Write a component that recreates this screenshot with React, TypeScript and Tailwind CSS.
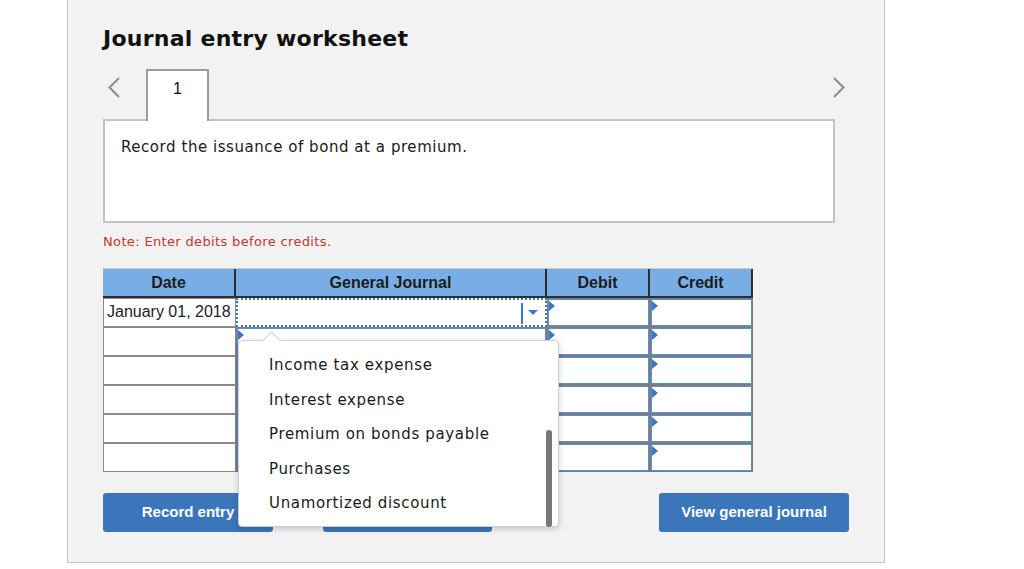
import { useState } from "react";

const VERDANA = "font-['DejaVu_Sans',Verdana,sans-serif]";
const ARIAL = "font-['Liberation_Sans',Arial,sans-serif]";

const accounts = [
  "Income tax expense",
  "Interest expense",
  "Premium on bonds payable",
  "Purchases",
  "Unamortized discount",
];

// small blue marker in the top-left corner of an input cell
function Marker() {
  return (
    <span className="absolute left-0 top-[1px] h-0 w-0 border-y-[5px] border-l-[6px] border-y-transparent border-l-[#3a76c4]" />
  );
}

function InputCell() {
  return (
    <div className="h-full border border-[#7c7c7c] bg-white">
      <div className="relative h-full border border-[#5a8fd0] bg-white">
        <Marker />
      </div>
    </div>
  );
}

function Chevron({ dir }: { dir: "left" | "right" }) {
  return (
    <svg width="12" height="21" viewBox="0 0 12 21" fill="none">
      <polyline
        points={dir === "left" ? "11,1 1.5,10.5 11,20" : "1,1 10.5,10.5 1,20"}
        stroke="#8c8c8c"
        strokeWidth="2"
      />
    </svg>
  );
}

export default function App() {
  const [rows] = useState(["January 01, 2018", "", "", "", "", ""]);

  return (
    <div className="min-h-screen bg-white">
      <div className="ml-[67px] h-[563px] w-[818px] border-x border-b border-[#c6c6c6] bg-[#f2f2f2] pl-[35px] pr-[35px] pt-[24px]">
        {/* Title */}
        <h1 className={`${VERDANA} text-[22px] leading-[30px] font-bold tracking-[0.25px] text-[#111]`}>
          Journal entry worksheet
        </h1>

        {/* Tabs */}
        <div className="mt-[15px] flex h-[50px] items-start">
          <div className="w-[43px] pl-[5px] pt-[8px]">
            <Chevron dir="left" />
          </div>
          <div className={`${ARIAL} relative z-10 h-[52px] w-[63px] border-2 border-b-0 border-[#9b9b9b] bg-white pt-[8px] text-center text-[16px] leading-[20px] text-[#111]`}>
            1
          </div>
          <div className="ml-auto mr-[4px] pt-[8px]">
            <Chevron dir="right" />
          </div>
        </div>

        {/* Question box */}
        <div className={`${VERDANA} h-[104px] w-[732px] border-2 border-[#c3c3c3] bg-white pl-[16px] pt-[16px] text-[15px] leading-[20px] tracking-[0.55px] text-[#1a1a1a]`}>
          Record the issuance of bond at a premium.
        </div>

        <p className={`${VERDANA} mt-[10px] text-[13px] leading-[18px] tracking-[0.35px] text-[#c0392b]`}>
          Note: Enter debits before credits.
        </p>

        {/* Journal table */}
        <div className="relative mt-[17px] w-[650px]">
          <div className={`${ARIAL} grid h-[30px] grid-cols-[133px_311px_103px_103px] border-t border-b-2 border-t-[#c8c8c8] border-b-[#2e2e2e] bg-[#78ade5] text-[16px] leading-[27px] font-bold text-[#1c1c1c]`}>
            <div className="border-r-2 border-[#2e2e2e] text-center">Date</div>
            <div className="border-r-2 border-[#2e2e2e] text-center">General Journal</div>
            <div className="border-r-2 border-[#2e2e2e] text-center">Debit</div>
            <div className="border-r-2 border-[#2e2e2e] text-center">Credit</div>
          </div>

          {rows.map((date, i) => (
            <div key={i} className="grid h-[29px] grid-cols-[133px_311px_103px_103px]">
              <div className={`${ARIAL} border border-[#8a8a8a] bg-white pl-[3px] text-[16px] leading-[25px] text-[#222]`}>
                {date}
              </div>
              {i === 0 ? (
                <div className="relative h-full border-2 border-dotted border-[#3a78c6] bg-white">
                  <span className="absolute right-[22px] top-[3px] h-[21px] w-[2px] bg-[#3a78c6]" />
                  <span className="absolute right-[7px] top-[10px] h-0 w-0 border-x-[5px] border-t-[5px] border-x-transparent border-t-[#3a78c6]" />
                </div>
              ) : (
                <InputCell />
              )}
              <InputCell />
              <InputCell />
            </div>
          ))}

          {/* Account dropdown */}
          <div className={`${VERDANA} absolute left-[135px] top-[72px] z-20 h-[187px] w-[321px] rounded-[4px] border border-[#cfcfcf] bg-white pt-[7px] shadow-[0_2px_6px_rgba(0,0,0,0.18)]`}>
            <span className="absolute left-[26px] top-[-7px] h-[13px] w-[13px] rotate-45 border-l border-t border-[#cfcfcf] bg-white" />
            {accounts.map((a) => (
              <div key={a} className="h-[34.5px] pl-[30px] text-[15px] leading-[34.5px] tracking-[0.65px] text-[#1a1a1a]">
                {a}
              </div>
            ))}
            <span className="absolute left-[307px] top-[89px] h-[97px] w-[6px] rounded-full bg-[#777]" />
          </div>
        </div>

        {/* Buttons */}
        <div className={`${ARIAL} mt-[21px] flex h-[39px] text-[15px] font-bold text-white`}>
          <button className="w-[170px] rounded-[3px] bg-[#3b76bb]">Record entry</button>
          {/* label hidden behind the open dropdown */}
          <button aria-label="Clear entry" className="ml-[50px] w-[169px] rounded-[3px] bg-[#3b76bb]" />
          <button className="ml-auto w-[190px] rounded-[3px] bg-[#3b76bb]">View general journal</button>
        </div>
      </div>
    </div>
  );
}
